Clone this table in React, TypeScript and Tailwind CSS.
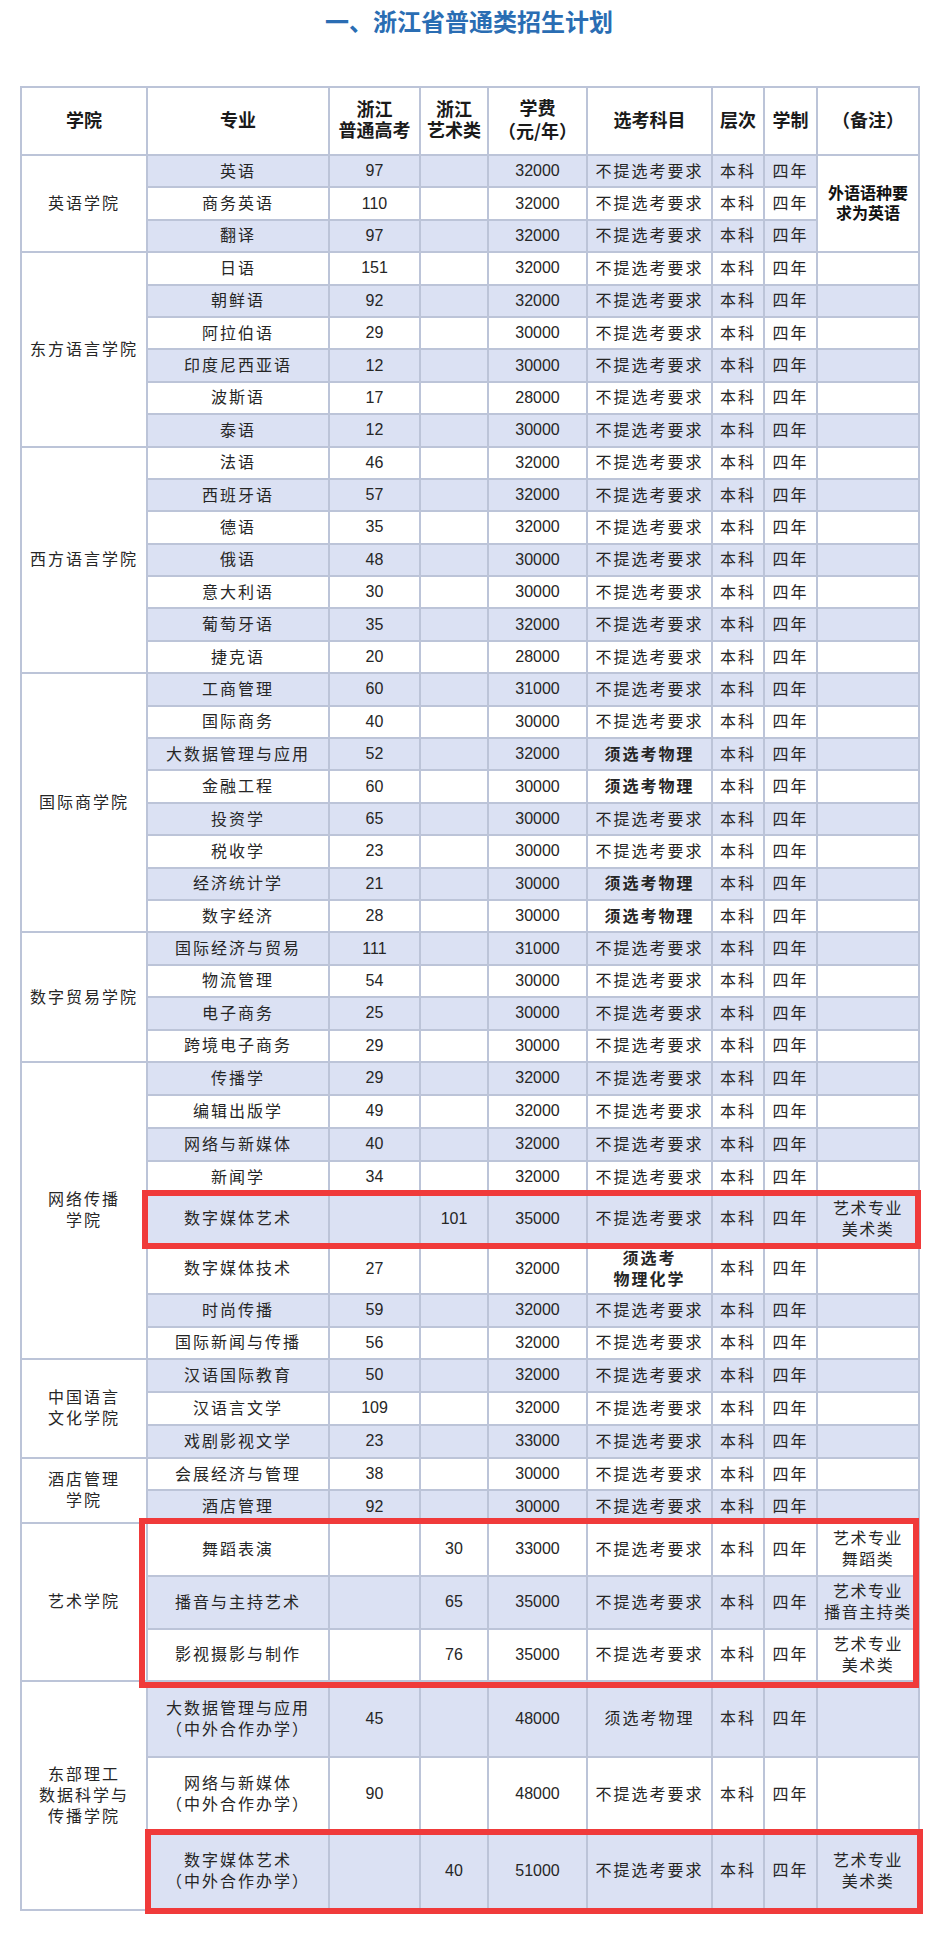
import React from "react";

type Row = {
  major: React.ReactNode;
  gk: string;
  art: string;
  fee: string;
  subj: React.ReactNode;
  bold?: boolean;
  note?: React.ReactNode;
  h: string;
};

type College = {
  name: React.ReactNode;
  rows: Row[];
  mergedNote?: React.ReactNode;
};

const NO = "不提选考要求";
const H = "h-[32.4px]";

const artNote = (kind: string) => (
  <>
    艺术专业
    <br />
    {kind}
  </>
);

const coop = (name: string) => (
  <>
    {name}
    <br />
    （中外合作办学）
  </>
);

const colleges: College[] = [
  {
    name: "英语学院",
    mergedNote: "外语语种要求为英语",
    rows: [
      { major: "英语", gk: "97", art: "", fee: "32000", subj: NO, h: H },
      { major: "商务英语", gk: "110", art: "", fee: "32000", subj: NO, h: H },
      { major: "翻译", gk: "97", art: "", fee: "32000", subj: NO, h: H },
    ],
  },
  {
    name: "东方语言学院",
    rows: [
      { major: "日语", gk: "151", art: "", fee: "32000", subj: NO, h: H },
      { major: "朝鲜语", gk: "92", art: "", fee: "32000", subj: NO, h: H },
      { major: "阿拉伯语", gk: "29", art: "", fee: "30000", subj: NO, h: H },
      { major: "印度尼西亚语", gk: "12", art: "", fee: "30000", subj: NO, h: H },
      { major: "波斯语", gk: "17", art: "", fee: "28000", subj: NO, h: H },
      { major: "泰语", gk: "12", art: "", fee: "30000", subj: NO, h: H },
    ],
  },
  {
    name: "西方语言学院",
    rows: [
      { major: "法语", gk: "46", art: "", fee: "32000", subj: NO, h: H },
      { major: "西班牙语", gk: "57", art: "", fee: "32000", subj: NO, h: H },
      { major: "德语", gk: "35", art: "", fee: "32000", subj: NO, h: H },
      { major: "俄语", gk: "48", art: "", fee: "30000", subj: NO, h: H },
      { major: "意大利语", gk: "30", art: "", fee: "30000", subj: NO, h: H },
      { major: "葡萄牙语", gk: "35", art: "", fee: "32000", subj: NO, h: H },
      { major: "捷克语", gk: "20", art: "", fee: "28000", subj: NO, h: H },
    ],
  },
  {
    name: "国际商学院",
    rows: [
      { major: "工商管理", gk: "60", art: "", fee: "31000", subj: NO, h: H },
      { major: "国际商务", gk: "40", art: "", fee: "30000", subj: NO, h: H },
      { major: "大数据管理与应用", gk: "52", art: "", fee: "32000", subj: "须选考物理", bold: true, h: H },
      { major: "金融工程", gk: "60", art: "", fee: "30000", subj: "须选考物理", bold: true, h: H },
      { major: "投资学", gk: "65", art: "", fee: "30000", subj: NO, h: H },
      { major: "税收学", gk: "23", art: "", fee: "30000", subj: NO, h: H },
      { major: "经济统计学", gk: "21", art: "", fee: "30000", subj: "须选考物理", bold: true, h: H },
      { major: "数字经济", gk: "28", art: "", fee: "30000", subj: "须选考物理", bold: true, h: H },
    ],
  },
  {
    name: "数字贸易学院",
    rows: [
      { major: "国际经济与贸易", gk: "111", art: "", fee: "31000", subj: NO, h: H },
      { major: "物流管理", gk: "54", art: "", fee: "30000", subj: NO, h: H },
      { major: "电子商务", gk: "25", art: "", fee: "30000", subj: NO, h: H },
      { major: "跨境电子商务", gk: "29", art: "", fee: "30000", subj: NO, h: H },
    ],
  },
  {
    name: (
      <>
        网络传播
        <br />
        学院
      </>
    ),
    rows: [
      { major: "传播学", gk: "29", art: "", fee: "32000", subj: NO, h: "h-[33px]" },
      { major: "编辑出版学", gk: "49", art: "", fee: "32000", subj: NO, h: "h-[33px]" },
      { major: "网络与新媒体", gk: "40", art: "", fee: "32000", subj: NO, h: "h-[33px]" },
      { major: "新闻学", gk: "34", art: "", fee: "32000", subj: NO, h: "h-[33px]" },
      { major: "数字媒体艺术", gk: "", art: "101", fee: "35000", subj: NO, note: artNote("美术类"), h: "h-[50px]" },
      {
        major: "数字媒体技术",
        gk: "27",
        art: "",
        fee: "32000",
        subj: (
          <>
            须选考
            <br />
            物理化学
          </>
        ),
        bold: true,
        h: "h-[50px]",
      },
      { major: "时尚传播", gk: "59", art: "", fee: "32000", subj: NO, h: "h-[33px]" },
      { major: "国际新闻与传播", gk: "56", art: "", fee: "32000", subj: NO, h: "h-[32px]" },
    ],
  },
  {
    name: (
      <>
        中国语言
        <br />
        文化学院
      </>
    ),
    rows: [
      { major: "汉语国际教育", gk: "50", art: "", fee: "32000", subj: NO, h: "h-[33px]" },
      { major: "汉语言文学", gk: "109", art: "", fee: "32000", subj: NO, h: "h-[33px]" },
      { major: "戏剧影视文学", gk: "23", art: "", fee: "33000", subj: NO, h: "h-[33px]" },
    ],
  },
  {
    name: (
      <>
        酒店管理
        <br />
        学院
      </>
    ),
    rows: [
      { major: "会展经济与管理", gk: "38", art: "", fee: "30000", subj: NO, h: "h-[32.5px]" },
      { major: "酒店管理", gk: "92", art: "", fee: "30000", subj: NO, h: "h-[32.5px]" },
    ],
  },
  {
    name: "艺术学院",
    rows: [
      { major: "舞蹈表演", gk: "", art: "30", fee: "33000", subj: NO, note: artNote("舞蹈类"), h: "h-[53px]" },
      { major: "播音与主持艺术", gk: "", art: "65", fee: "35000", subj: NO, note: artNote("播音主持类"), h: "h-[53px]" },
      { major: "影视摄影与制作", gk: "", art: "76", fee: "35000", subj: NO, note: artNote("美术类"), h: "h-[52px]" },
    ],
  },
  {
    name: (
      <>
        东部理工
        <br />
        数据科学与
        <br />
        传播学院
      </>
    ),
    rows: [
      { major: coop("大数据管理与应用"), gk: "45", art: "", fee: "48000", subj: "须选考物理", h: "h-[76px]" },
      { major: coop("网络与新媒体"), gk: "90", art: "", fee: "48000", subj: NO, h: "h-[75px]" },
      { major: coop("数字媒体艺术"), gk: "", art: "40", fee: "51000", subj: NO, note: artNote("美术类"), h: "h-[78px]" },
    ],
  },
];

const cell = "border-2 border-[#bcc4d8] text-center align-middle p-0";
const zh = "text-[16px] leading-[21px] tracking-[2px] text-[#262626]";
const num = "text-[16px] text-[#262626]";
const head =
  "border-2 border-[#bcc4d8] text-center align-middle p-0 text-[18px] leading-[21px] font-bold text-[#1a1a1a]";

function Header() {
  return (
    <tr className="h-[68px] bg-white">
      <th className={head}>学院</th>
      <th className={head}>专业</th>
      <th className={head}>
        浙江
        <br />
        普通高考
      </th>
      <th className={head}>
        浙江
        <br />
        艺术类
      </th>
      <th className={head}>
        学费
        <br />
        <span className="font-['Noto_Sans_CJK_SC',sans-serif]">（元/年）</span>
      </th>
      <th className={head}>选考科目</th>
      <th className={head}>层次</th>
      <th className={head}>学制</th>
      <th className={head}>（备注）</th>
    </tr>
  );
}

export default function App() {
  let idx = 0;
  const body: React.ReactNode[] = [];
  colleges.forEach((c, ci) => {
    c.rows.forEach((r, ri) => {
      const shade = idx % 2 === 0 ? "bg-[#dbe1f3]" : "bg-white";
      idx++;
      body.push(
        <tr key={`${ci}-${ri}`} className={r.h}>
          {ri === 0 && (
            <td rowSpan={c.rows.length} className={`${cell} ${zh} bg-white`}>
              {c.name}
            </td>
          )}
          <td className={`${cell} ${zh} ${shade}`}>{r.major}</td>
          <td className={`${cell} ${num} ${shade}`}>{r.gk}</td>
          <td className={`${cell} ${num} ${shade}`}>{r.art}</td>
          <td className={`${cell} ${num} ${shade}`}>{r.fee}</td>
          <td className={`${cell} ${zh} ${shade} ${r.bold ? "font-bold text-[#111]" : ""}`}>{r.subj}</td>
          <td className={`${cell} ${zh} ${shade}`}>本科</td>
          <td className={`${cell} ${zh} ${shade}`}>四年</td>
          {c.mergedNote ? (
            ri === 0 && (
              <td
                rowSpan={c.rows.length}
                className={`${cell} bg-white px-1 text-[16px] leading-5 font-bold text-[#111]`}
              >
                {c.mergedNote}
              </td>
            )
          ) : (
            <td className={`${cell} ${shade} text-[16px] leading-[21px] tracking-[1.5px] text-[#262626]`}>{r.note}</td>
          )}
        </tr>
      );
    });
  });

  return (
    <div className="min-h-[1939px] w-[938px] bg-white font-['Liberation_Sans','Noto_Sans_CJK_SC',sans-serif]">
      <div className="flex h-[46px] items-center justify-center text-[24px] font-bold text-[#2a6db3]">
        一、浙江省普通类招生计划
      </div>
      <div className="relative mt-[40px]">
        <table className="ml-[20px] w-[898px] table-fixed border-collapse">
          <colgroup>
            <col className="w-[126px]" />
            <col className="w-[182px]" />
            <col className="w-[91px]" />
            <col className="w-[68px]" />
            <col className="w-[99px]" />
            <col className="w-[125px]" />
            <col className="w-[52px]" />
            <col className="w-[53px]" />
            <col className="w-[102px]" />
          </colgroup>
          <thead>
            <Header />
          </thead>
          <tbody>{body}</tbody>
        </table>
        <div className="pointer-events-none absolute left-[142px] top-[1104px] h-[59px] w-[779px] border-[6px] border-[#f03a3a]" />
        <div className="pointer-events-none absolute left-[139px] top-[1432px] h-[170px] w-[780px] border-[6px] border-[#f03a3a]" />
        <div className="pointer-events-none absolute left-[145px] top-[1743px] h-[85px] w-[778px] border-[6px] border-[#f03a3a]" />
      </div>
    </div>
  );
}
